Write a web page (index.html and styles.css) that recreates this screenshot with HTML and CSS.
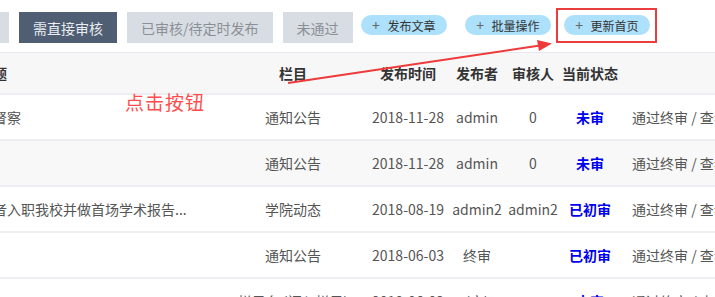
FILE: index.html
```html
<!DOCTYPE html>
<html lang="zh-CN">
<head>
  <meta charset="UTF-8">
  <meta name="viewport" content="width=device-width, initial-scale=1.0">
  <title>文章审核</title>
  <link rel="stylesheet" href="styles.css">
</head>
<body>
  <div class="page">
    <div class="toolbar">
      <span class="tab tab-first">全部</span>
      <span class="tab active">需直接审核</span>
      <span class="tab">已审核/待定时发布</span>
      <span class="tab">未通过</span>
      <span class="pill pill-a"><i>+</i>发布文章</span>
      <span class="pill pill-b"><i>+</i>批量操作</span>
      <span class="mark"><span class="pill"><i>+</i>更新首页</span></span>
    </div>

    <table class="list">
      <colgroup>
        <col class="c-title"><col class="c-cat"><col class="c-date"><col class="c-pub"><col class="c-rev"><col class="c-state"><col class="c-op">
      </colgroup>
      <thead>
        <tr><th class="t">标题</th><th>栏目</th><th>发布时间</th><th>发布者</th><th>审核人</th><th>当前状态</th><th></th></tr>
      </thead>
      <tbody>
        <tr><td class="t shift">教学督察</td><td>通知公告</td><td>2018-11-28</td><td>admin</td><td>0</td><td class="st">未审</td><td class="op">通过终审 / 查看</td></tr>
        <tr class="hl"><td class="t"></td><td>通知公告</td><td>2018-11-28</td><td>admin</td><td>0</td><td class="st">未审</td><td class="op">通过终审 / 查看</td></tr>
        <tr><td class="t">学者入职我校并做首场学术报告...</td><td>学院动态</td><td>2018-08-19</td><td>admin2</td><td>admin2</td><td class="st">已初审</td><td class="op">通过终审 / 查看</td></tr>
        <tr><td class="t"></td><td>通知公告</td><td>2018-06-03</td><td>终审</td><td></td><td class="st">已初审</td><td class="op">通过终审 / 查看</td></tr>
        <tr><td class="t"></td><td>栏目名 (订入栏目)</td><td>2018-06-03</td><td>(空)</td><td></td><td class="st">未审</td><td class="op">通过终审 / 查看</td></tr>
      </tbody>
    </table>

    <div class="note">点击按钮</div>
    <svg class="arrow" width="715" height="297" viewBox="0 0 715 297">
      <line x1="288" y1="83" x2="540" y2="45.5" stroke="#ee3a3a" stroke-width="2"/>
      <polygon points="552,43.5 537,40 539,51" fill="#ee3a3a"/>
    </svg>
  </div>
</body>
</html>
```

FILE: styles.css
```css
body{margin:0;font-family:"Noto Sans CJK SC","Microsoft YaHei",sans-serif;background:#fff;overflow:hidden;}
.page{position:relative;width:715px;height:297px;overflow:hidden;}

.toolbar{display:flex;align-items:center;height:31px;padding-top:12px;}
.tab{display:flex;align-items:center;height:31px;padding:0 14px;margin-right:10px;background:#d8dde3;color:#8a8f96;font-size:14px;white-space:nowrap;}
.tab-first{margin-left:-47px;}
.tab.active{background:#4f5e73;color:#e9edf2;}
.pill{display:flex;align-items:center;height:20px;padding:0 11px;border-radius:10px;background:#ade0fb;color:#333;font-size:12px;white-space:nowrap;margin-top:-5px;}
.pill i{display:inline-block;width:9px;text-align:center;font-style:normal;color:#666;font-size:14px;margin-right:7px;}
.pill-a{margin-left:-2px;}
.pill-b{margin-left:18px;}
.mark{display:flex;margin-left:5px;margin-top:-4px;padding:5px 5px 6px 6px;border:2px solid #ea3d3d;}
.mark .pill{margin-top:0;}

.list{border-collapse:collapse;table-layout:fixed;width:855px;margin:9px 0 0 -100px;font-size:14px;color:#555;}
.c-title{width:320px;}
.c-cat{width:146px;}
.c-date{width:84px;}
.c-pub{width:54px;}
.c-rev{width:58px;}
.c-state{width:56px;}
.c-op{width:137px;}
.list th{height:40px;padding:0;background:#f7f7f7;border-top:1px solid #e6e9ed;color:#333;font-weight:bold;white-space:nowrap;}
.list td{height:44px;padding:0;text-align:center;border-top:2px solid #eceef1;white-space:nowrap;overflow:hidden;}
.list .t{text-align:left;padding-left:79px;}
.list .shift{text-indent:-14px;}
.list tr.hl td{background:#f8f8f8;}
.list .st{color:#0000f0;font-weight:bold;}
.list .op{text-align:left;padding-left:14px;}

.note{position:absolute;left:125px;top:88px;color:#ff4d4d;font-size:19px;letter-spacing:1px;}
.arrow{position:absolute;left:0;top:0;}
```
